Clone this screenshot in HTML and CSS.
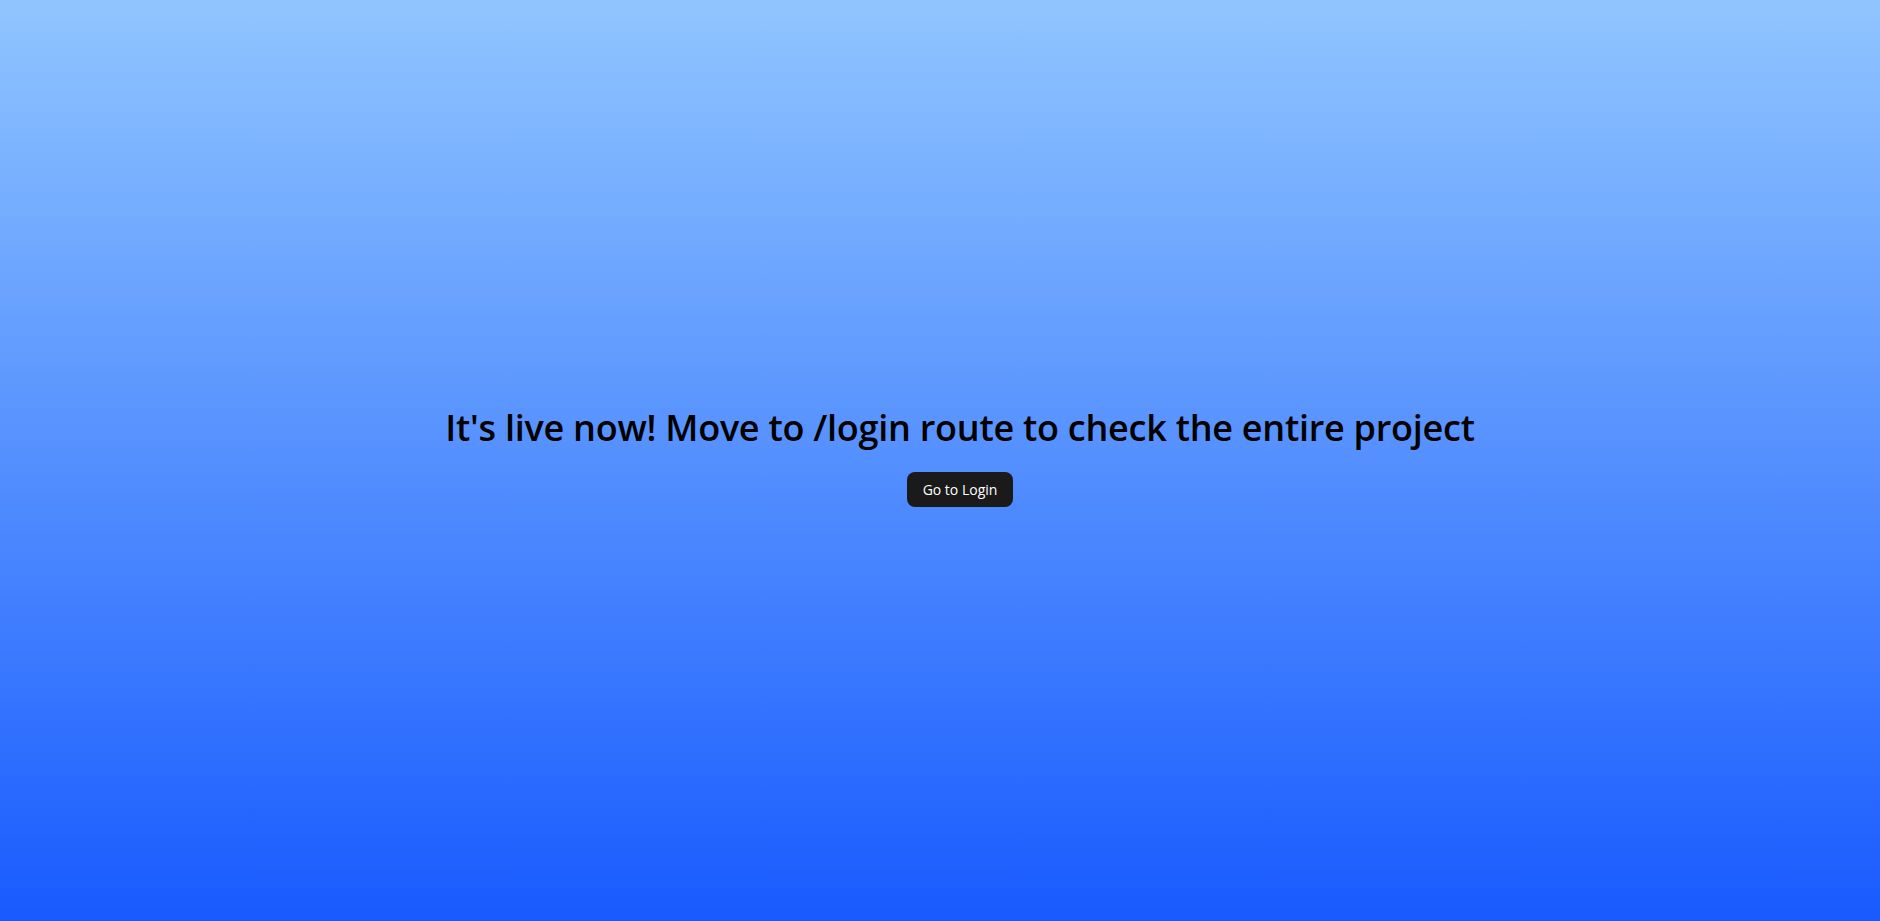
FILE: index.html
```html
<!DOCTYPE html>
<html lang="en">
<head>
<meta charset="utf-8">
<title>Live</title>
<link rel="stylesheet" href="styles.css">
</head>
<body>
<main class="page">
  <h1 class="title">It's live now! Move to /login route to check the entire project</h1>
  <button class="login-btn" type="button">Go to Login</button>
</main>
</body>
</html>
```

FILE: styles.css
```css
html, body {
  margin: 0;
  padding: 0;
  height: 100%;
}
body {
  font-family: "Open Sans", "Noto Sans", sans-serif;
  background: linear-gradient(to bottom, #90c5ff 0%, #185aff 100%);
}
.page {
  box-sizing: border-box;
  height: 100%;
  display: flex;
  flex-direction: column;
  align-items: center;
  justify-content: center;
  gap: 24px;
  padding: 0 0 6px 40px;
}
.title {
  margin: 0;
  font-size: 36px;
  line-height: 40px;
  font-weight: 600;
  color: #000;
  letter-spacing: -0.25px;
}
.login-btn {
  background: #1a1a1a;
  color: #fff;
  border: none;
  border-radius: 8px;
  width: 106px;
  height: 35px;
  font-family: "Open Sans", "Noto Sans", sans-serif;
  font-size: 14px;
  padding: 0;
  cursor: pointer;
}
```
